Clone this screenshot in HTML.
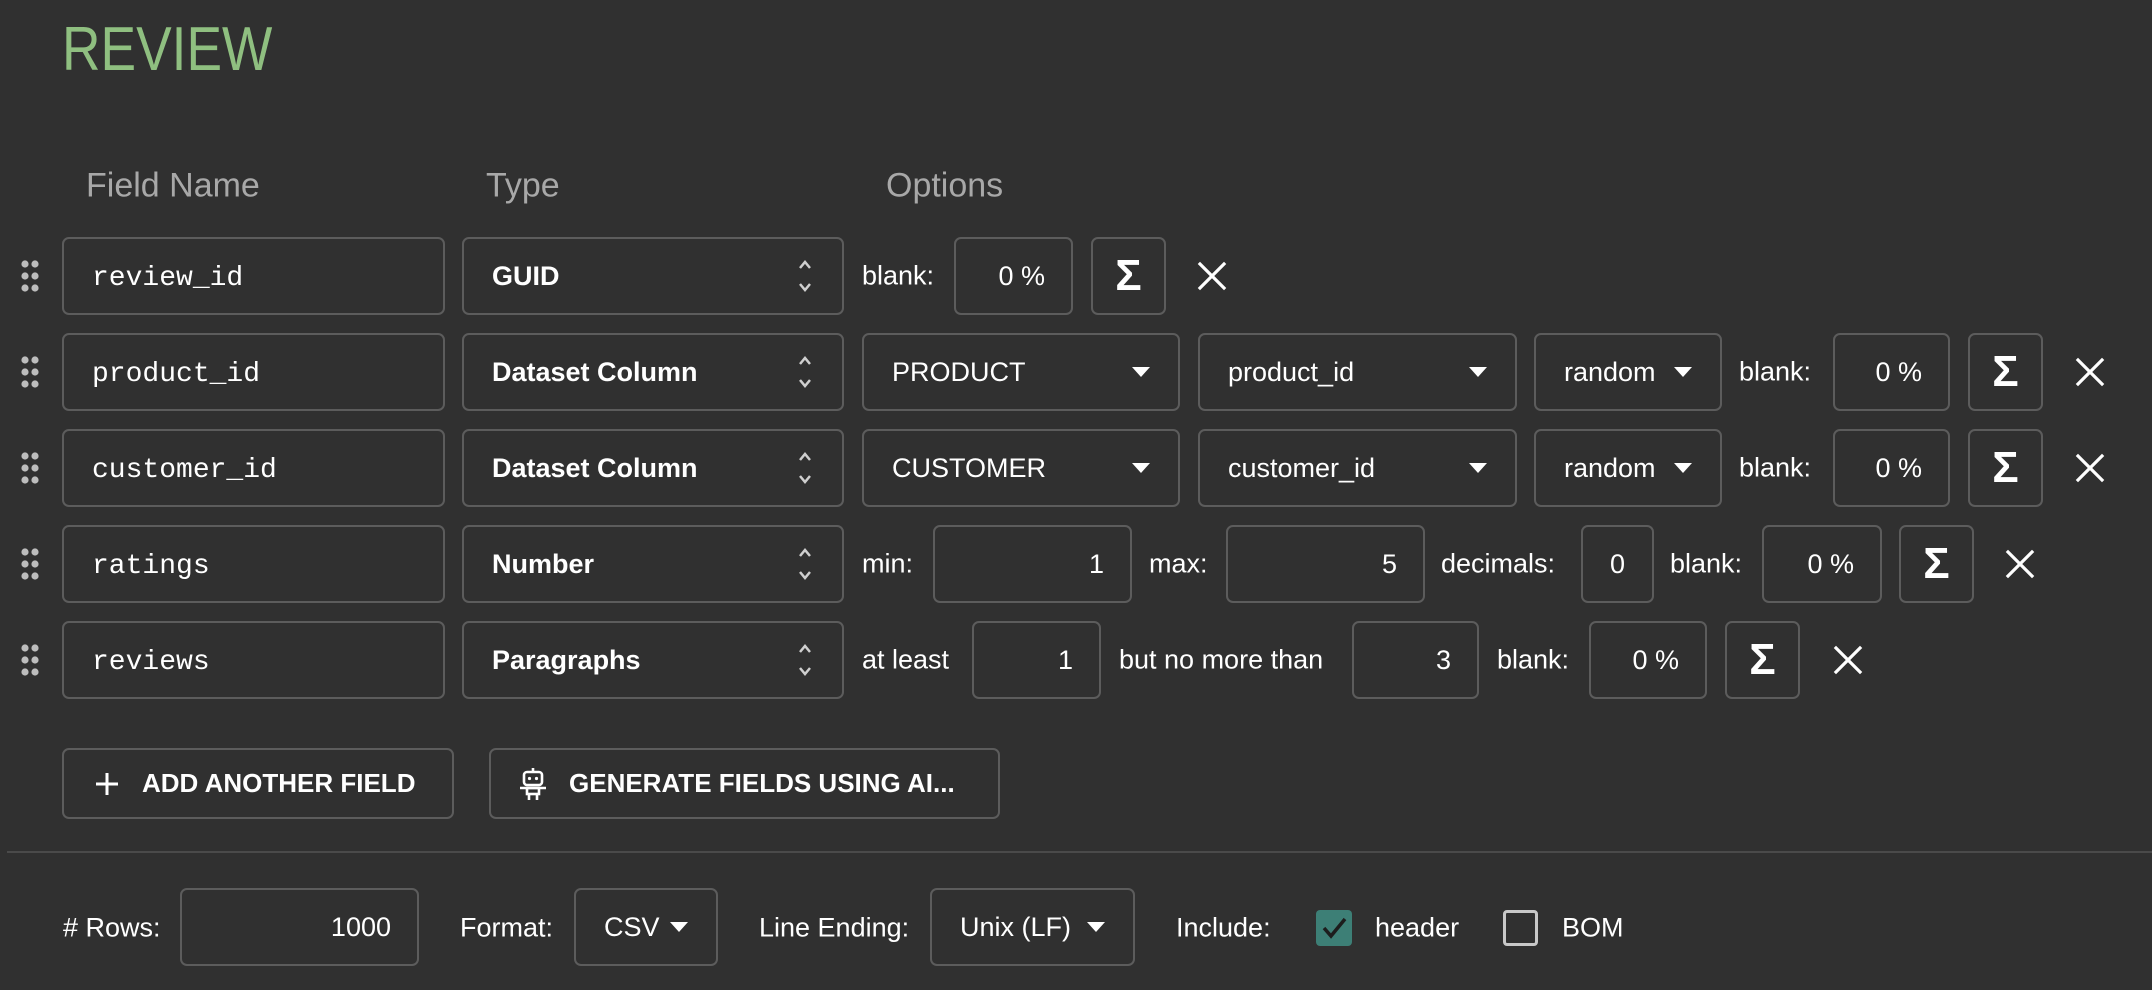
<!DOCTYPE html>
<html><head><meta charset="utf-8"><style>
*{box-sizing:border-box;margin:0;padding:0}
body{width:2152px;height:990px;background:#303030;overflow:hidden;position:relative;font-family:"Liberation Sans",Arial,sans-serif;color:#fff}
.a{position:absolute}
.box{position:absolute;border:2px solid #5c5c5c;border-radius:7px;height:78px;display:flex;align-items:center;font-size:27px}
.lbl{position:absolute;font-size:27px;line-height:1;transform:translateY(-50%)}
.mono{font-family:"Liberation Mono",monospace;font-size:28px;padding-left:28px;padding-top:5px}
.bold{font-weight:bold;padding-left:28px}
.r{justify-content:flex-end;padding-right:26px}
.sel{padding-left:28px}
.tri{position:absolute;right:28px;top:50%;margin-top:-5px;width:0;height:0;border-left:9px solid transparent;border-right:9px solid transparent;border-top:10px solid #fff}
.spin{position:absolute;right:30px;top:50%;transform:translateY(-50%)}
.sig{justify-content:center;font-size:44px;font-weight:bold;width:75px}
.x{position:absolute;width:30px;height:30px;transform:translate(-50%,-50%)}
.h{position:absolute;top:186px;transform:translateY(-50%);font-size:34px;color:#a8a8a8}
.drag{position:absolute;left:21px;width:18px;height:32px;transform:translateY(-50%)}
</style></head><body>
<div class="a" style="left:62px;top:14px;font-size:62px;color:#8fbf80;font-weight:300;transform:scaleX(0.86);transform-origin:left top">REVIEW</div>
<div class="h" style="left:86px">Field Name</div>
<div class="h" style="left:486px">Type</div>
<div class="h" style="left:886px">Options</div>

<svg width="0" height="0" style="position:absolute"><defs><g id="dg" fill="#bdbdbd"><circle cx="4" cy="4" r="3.6"/><circle cx="14" cy="4" r="3.6"/><circle cx="4" cy="16" r="3.6"/><circle cx="14" cy="16" r="3.6"/><circle cx="4" cy="28" r="3.6"/><circle cx="14" cy="28" r="3.6"/></g>
<g id="xx" stroke="#fff" stroke-width="3.2" stroke-linecap="square"><line x1="3" y1="3" x2="27" y2="27"/><line x1="27" y1="3" x2="3" y2="27"/></g>
<g id="sp" fill="none" stroke="#cfcfcf" stroke-width="2.5"><polyline points="2,9 7,3 12,9"/><polyline points="2,25 7,31 12,25"/></g></defs></svg>

<svg class="drag" style="top:276px" viewBox="0 0 18 32"><use href="#dg"/></svg>
<div class="box mono" style="left:62px;width:383px;top:237px">review_id</div>
<div class="box bold" style="left:462px;width:382px;top:237px">GUID<svg class="spin" width="14" height="34"><use href="#sp"/></svg></div>
<div class="lbl" style="left:862px;top:276px">blank:</div>
<div class="box r" style="left:954px;width:119px;top:237px">0 %</div>
<div class="box sig" style="left:1091px;top:237px">Σ</div>
<svg class="x" style="left:1212px;top:276px"><use href="#xx"/></svg>

<svg class="drag" style="top:372px" viewBox="0 0 18 32"><use href="#dg"/></svg>
<div class="box mono" style="left:62px;width:383px;top:333px">product_id</div>
<div class="box bold" style="left:462px;width:382px;top:333px">Dataset Column<svg class="spin" width="14" height="34"><use href="#sp"/></svg></div>
<div class="box sel" style="left:862px;width:318px;top:333px">PRODUCT<span class="tri"></span></div>
<div class="box sel" style="left:1198px;width:319px;top:333px">product_id<span class="tri"></span></div>
<div class="box sel" style="left:1534px;width:188px;top:333px">random<span class="tri"></span></div>
<div class="lbl" style="left:1739px;top:372px">blank:</div>
<div class="box r" style="left:1833px;width:117px;top:333px">0 %</div>
<div class="box sig" style="left:1968px;top:333px">Σ</div>
<svg class="x" style="left:2090px;top:372px"><use href="#xx"/></svg>

<svg class="drag" style="top:468px" viewBox="0 0 18 32"><use href="#dg"/></svg>
<div class="box mono" style="left:62px;width:383px;top:429px">customer_id</div>
<div class="box bold" style="left:462px;width:382px;top:429px">Dataset Column<svg class="spin" width="14" height="34"><use href="#sp"/></svg></div>
<div class="box sel" style="left:862px;width:318px;top:429px">CUSTOMER<span class="tri"></span></div>
<div class="box sel" style="left:1198px;width:319px;top:429px">customer_id<span class="tri"></span></div>
<div class="box sel" style="left:1534px;width:188px;top:429px">random<span class="tri"></span></div>
<div class="lbl" style="left:1739px;top:468px">blank:</div>
<div class="box r" style="left:1833px;width:117px;top:429px">0 %</div>
<div class="box sig" style="left:1968px;top:429px">Σ</div>
<svg class="x" style="left:2090px;top:468px"><use href="#xx"/></svg>

<svg class="drag" style="top:564px" viewBox="0 0 18 32"><use href="#dg"/></svg>
<div class="box mono" style="left:62px;width:383px;top:525px">ratings</div>
<div class="box bold" style="left:462px;width:382px;top:525px">Number<svg class="spin" width="14" height="34"><use href="#sp"/></svg></div>
<div class="lbl" style="left:862px;top:564px">min:</div>
<div class="box r" style="left:933px;width:199px;top:525px">1</div>
<div class="lbl" style="left:1149px;top:564px">max:</div>
<div class="box r" style="left:1226px;width:199px;top:525px">5</div>
<div class="lbl" style="left:1441px;top:564px">decimals:</div>
<div class="box" style="left:1581px;width:73px;top:525px;justify-content:center">0</div>
<div class="lbl" style="left:1670px;top:564px">blank:</div>
<div class="box r" style="left:1762px;width:120px;top:525px">0 %</div>
<div class="box sig" style="left:1899px;top:525px">Σ</div>
<svg class="x" style="left:2020px;top:564px"><use href="#xx"/></svg>

<svg class="drag" style="top:660px" viewBox="0 0 18 32"><use href="#dg"/></svg>
<div class="box mono" style="left:62px;width:383px;top:621px">reviews</div>
<div class="box bold" style="left:462px;width:382px;top:621px">Paragraphs<svg class="spin" width="14" height="34"><use href="#sp"/></svg></div>
<div class="lbl" style="left:862px;top:660px">at least</div>
<div class="box r" style="left:972px;width:129px;top:621px">1</div>
<div class="lbl" style="left:1119px;top:660px">but no more than</div>
<div class="box r" style="left:1352px;width:127px;top:621px">3</div>
<div class="lbl" style="left:1497px;top:660px">blank:</div>
<div class="box r" style="left:1589px;width:118px;top:621px">0 %</div>
<div class="box sig" style="left:1725px;top:621px">Σ</div>
<svg class="x" style="left:1848px;top:660px"><use href="#xx"/></svg>

<div class="box" style="left:62px;width:392px;top:748px;height:71px;font-weight:bold;font-size:26px;padding-left:30px">
<svg width="26" height="26" style="margin-right:22px"><path d="M13 2V24M2 13H24" stroke="#fff" stroke-width="3"/></svg>ADD ANOTHER FIELD</div>
<div class="box" style="left:489px;width:511px;top:748px;height:71px;font-weight:bold;font-size:26px;padding-left:28px">
<svg width="28" height="34" viewBox="0 0 28 34" style="margin-right:22px" fill="none" stroke="#fff" stroke-width="2.6"><line x1="14" y1="1" x2="14" y2="5"/><rect x="5" y="5" width="18" height="13" rx="3"/><circle cx="10.5" cy="11.5" r="1.6" fill="#fff" stroke="none"/><circle cx="17.5" cy="11.5" r="1.6" fill="#fff" stroke="none"/><line x1="1" y1="21" x2="27" y2="21"/><rect x="8" y="21" width="12" height="6"/><line x1="10" y1="27" x2="10" y2="33"/><line x1="18" y1="27" x2="18" y2="33"/></svg>GENERATE FIELDS USING AI...</div>

<div class="a" style="left:7px;right:0;top:851px;height:2px;background:#4a4a4a"></div>

<div class="lbl" style="left:63px;top:928px">#&nbsp;Rows:</div>
<div class="box r" style="left:180px;width:239px;top:888px">1000</div>
<div class="lbl" style="left:460px;top:928px">Format:</div>
<div class="box sel" style="left:574px;width:144px;top:888px">CSV<span class="tri"></span></div>
<div class="lbl" style="left:759px;top:928px">Line Ending:</div>
<div class="box sel" style="left:930px;width:205px;top:888px">Unix (LF)<span class="tri"></span></div>
<div class="lbl" style="left:1176px;top:928px">Include:</div>
<div class="a" style="left:1316px;top:910px;width:36px;height:36px;background:#3d7f76;border-radius:4px"><svg width="36" height="36"><path d="M8 18L15 26L29 9" stroke="#1d1d1d" stroke-width="3.5" fill="none"/></svg></div>
<div class="lbl" style="left:1375px;top:928px">header</div>
<div class="a" style="left:1503px;top:910px;width:35px;height:36px;border:3px solid #c8c8c8;border-radius:4px"></div>
<div class="lbl" style="left:1562px;top:928px">BOM</div>
</body></html>
